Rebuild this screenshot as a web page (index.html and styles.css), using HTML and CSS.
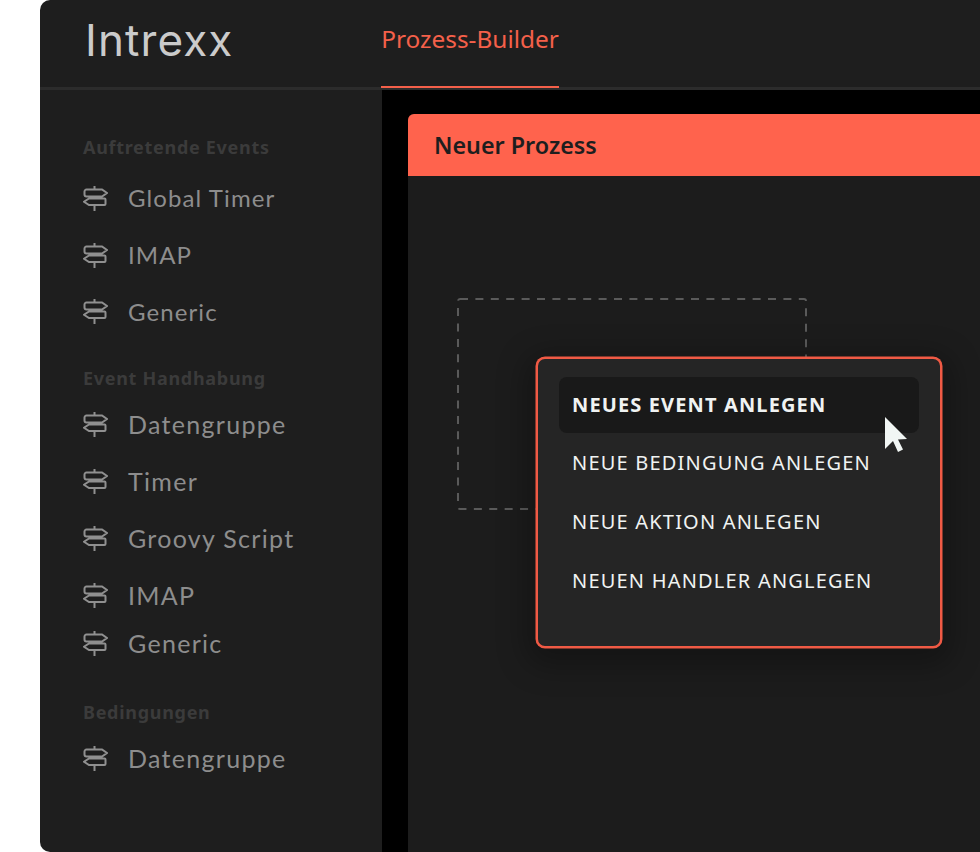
FILE: index.html
```html
<!DOCTYPE html>
<html lang="de">
<head>
<meta charset="utf-8">
<title>Intrexx Prozess-Builder</title>
<link rel="stylesheet" href="styles.css">
</head>
<body>
<svg class="defs" width="0" height="0" aria-hidden="true">
  <symbol id="sign" viewBox="0 0 25 26">
    <path d="M11.500 1v3.500M11.500 11.500v2M11.500 20v6" fill="none" stroke="currentColor" stroke-width="2"/>
    <path d="M3.500 4.500H19l5 3.500-5 3.500H3.500a2 2 0 0 1-2-2V6.500a2 2 0 0 1 2-2zM6 13.500h15.500a1 1 0 0 1 1 1V19a1 1 0 0 1-1 1H6l-5-3.250z" fill="none" stroke="currentColor" stroke-width="2" stroke-linejoin="miter"/>
  </symbol>
</svg>
<div class="app">
  <header class="topbar">
    <div class="logo">Intrexx</div>
    <div class="tab">Prozess-Builder</div>
  </header>
  <div class="body">
    <aside class="sidebar">
      <h2 class="group">Auftretende Events</h2>
      <ul class="list first">
        <li class="item"><svg class="icon"><use href="#sign"/></svg><span>Global Timer</span></li>
        <li class="item"><svg class="icon"><use href="#sign"/></svg><span>IMAP</span></li>
        <li class="item"><svg class="icon"><use href="#sign"/></svg><span>Generic</span></li>
      </ul>
      <h2 class="group second">Event Handhabung</h2>
      <ul class="list middle">
        <li class="item large"><svg class="icon"><use href="#sign"/></svg><span>Datengruppe</span></li>
        <li class="item large"><svg class="icon"><use href="#sign"/></svg><span>Timer</span></li>
        <li class="item large"><svg class="icon"><use href="#sign"/></svg><span>Groovy Script</span></li>
        <li class="item large short"><svg class="icon"><use href="#sign"/></svg><span>IMAP</span></li>
        <li class="item large"><svg class="icon"><use href="#sign"/></svg><span>Generic</span></li>
      </ul>
      <h2 class="group third">Bedingungen</h2>
      <ul class="list last">
        <li class="item large"><svg class="icon"><use href="#sign"/></svg><span>Datengruppe</span></li>
      </ul>
    </aside>
    <main class="stage">
      <section class="panel">
        <h1 class="panel-title">Neuer Prozess</h1>
        <div class="canvas">
          <svg class="dropzone" width="351" height="213" viewBox="0 0 351 213">
            <rect x="1" y="1" width="348" height="210" rx="2" fill="none" stroke="#5a5a5a" stroke-width="2" stroke-dasharray="8 7.400"/>
          </svg>
          <nav class="menu">
            <a class="menu-item active">NEUES EVENT ANLEGEN</a>
            <a class="menu-item">NEUE BEDINGUNG ANLEGEN</a>
            <a class="menu-item">NEUE AKTION ANLEGEN</a>
            <a class="menu-item">NEUEN HANDLER ANGLEGEN</a>
          </nav>
          <svg class="cursor" width="24" height="36" viewBox="0 0 24 36">
            <path d="M1 1l22 22-9 .5 5 10-5 2.500-5-11L1 33z" fill="#f1f6f4"/>
          </svg>
        </div>
      </section>
    </main>
  </div>
</div>
</body>
</html>
```
FILE: styles.css
```css
* { box-sizing: border-box; }
html, body { margin: 0; height: 100%; }
body {
  background: #fff;
  overflow: hidden;
  font-family: "Noto Sans", "Open Sans", sans-serif;
}
.defs { position: absolute; }
.app {
  margin-left: 40px;
  width: 940px;
  height: 852px;
  background: #1e1e1e;
  border-radius: 10px 0 0 10px;
  display: flex;
  flex-direction: column;
  overflow: hidden;
}
.topbar {
  height: 90px;
  flex: none;
  display: flex;
  border-bottom: 3px solid #2c2c2c;
  padding-left: 45px;
}
.logo {
  width: 296px;
  font-family: Inter, sans-serif;
  font-weight: 400;
  font-size: 44px;
  line-height: 80px;
  letter-spacing: 1.100px;
  color: #cbcbcb;
}
.tab {
  width: 178px;
  height: 88px;
  margin-bottom: -1px;
  padding-top: 21px;
  font-size: 24.400px;
  line-height: 36px;
  color: #f4604a;
  text-align: center;
  border-bottom: 2px solid #f4604a;
  white-space: nowrap;
}
.body { flex: 1; display: flex; min-height: 0; }
.sidebar {
  width: 342px;
  flex: none;
  padding: 46px 0 0 43px;
}
.group {
  margin: 0;
  font-size: 18px;
  line-height: 23px;
  font-weight: 700;
  letter-spacing: 0.700px;
  color: #3b3b3b;
}
.group.second { margin-top: 27px; }
.group.third { margin-top: 29.500px; }
.list { list-style: none; margin: 0; padding: 5px 0 0; }
.list.first { padding-top: 10.500px; }
.list.middle { padding-top: 6px; }
.list.last { padding-top: 5px; }
.item {
  height: 56.700px;
  display: flex;
  align-items: center;
  gap: 20px;
  font-family: Lato, sans-serif;
  font-size: 24px;
  letter-spacing: 1.100px;
  color: #8d8d8d;
}
.item.large { height: 56.900px; font-size: 25px; letter-spacing: 1.300px; }
.item.short { margin-bottom: -8.400px; }
.icon { width: 25px; height: 26px; flex: none; color: #909090; }
.stage {
  flex: 1;
  background: #000;
  padding: 24px 0 0 26px;
  min-width: 0;
}
.panel {
  height: 100%;
  background: #1c1c1c;
  border-radius: 6px 0 0 0;
  display: flex;
  flex-direction: column;
  overflow: hidden;
}
.panel-title {
  margin: 0;
  height: 62px;
  flex: none;
  padding-left: 26px;
  background: #ff634d;
  color: #1e1e1e;
  font-size: 23.300px;
  line-height: 62px;
  font-weight: 600;
}
.canvas { position: relative; flex: 1; }
.dropzone { position: absolute; left: 49px; top: 122px; }
.menu {
  position: absolute;
  left: 128px;
  top: 181px;
  width: 406px;
  height: 291px;
  padding: 18px 21px 0;
  background: #252525;
  border: 2px solid #f05a45;
  border-radius: 9px;
  box-shadow: 0 0 0 0.500px #f05a45, 0 8px 30px 10px rgba(0, 0, 0, 0.28);
  display: flex;
  flex-direction: column;
}
.menu-item {
  height: 59px;
  padding-left: 13px;
  display: flex;
  align-items: center;
  flex: none;
  font-size: 20px;
  letter-spacing: 1.200px;
  color: #f0f3f2;
}
.menu-item.active {
  height: 56px;
  padding-bottom: 2px;
  background: #191919;
  border-radius: 8px;
  font-weight: 700;
  letter-spacing: 1.130px;
}
.cursor { position: absolute; left: 476px; top: 240px; }
```
